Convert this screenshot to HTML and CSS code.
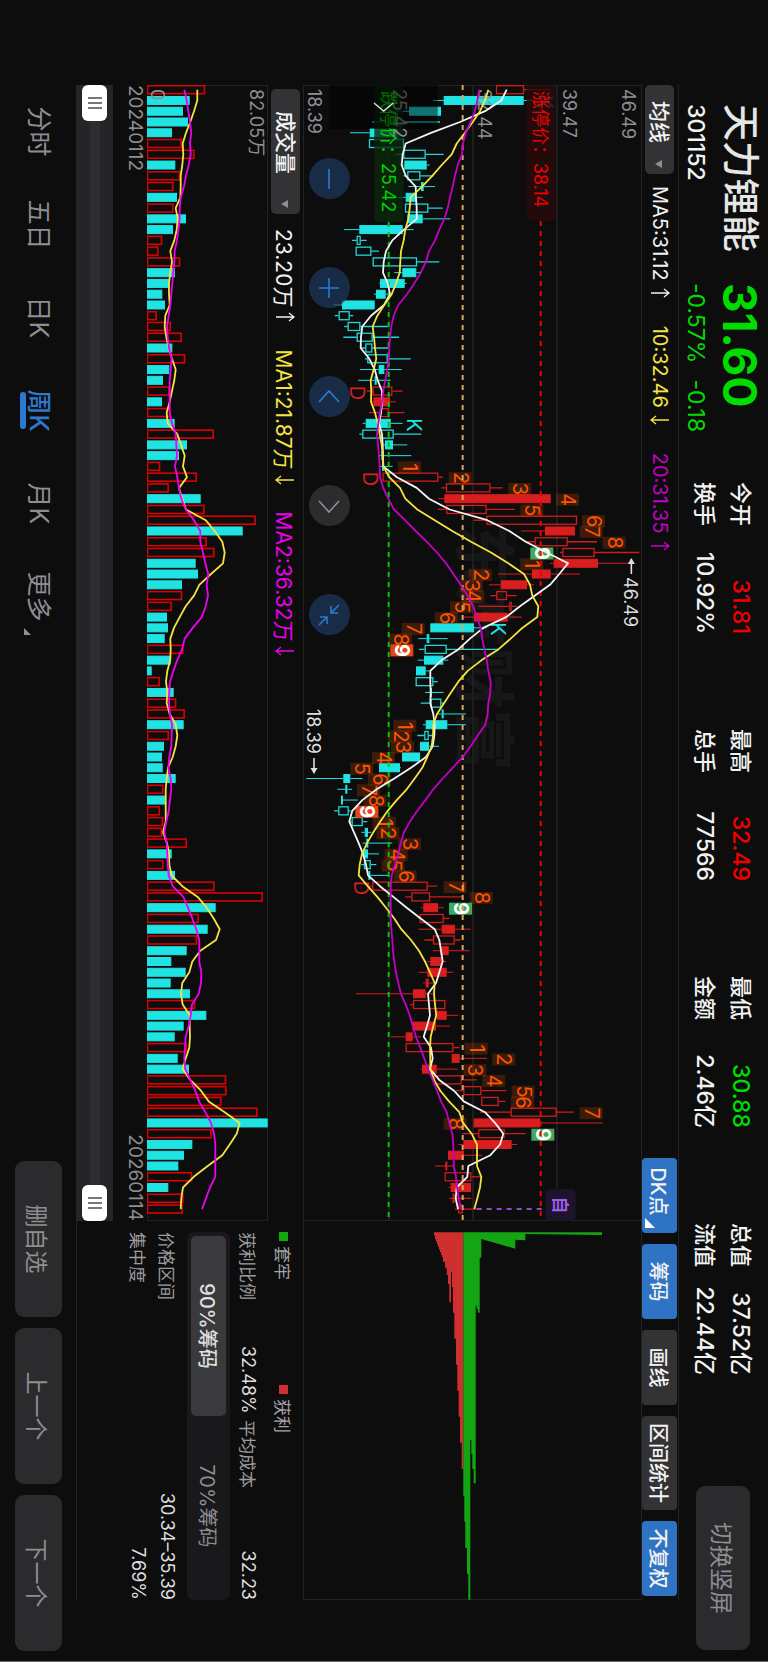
FILE: index.html
```html
<!DOCTYPE html>
<html lang="zh-CN">
<head>
<meta charset="utf-8">
<meta name="viewport" content="width=device-width, initial-scale=1">
<title>天力锂能 301152</title>
<link rel="stylesheet" href="styles.css">
</head>
<body>
<svg class="defs" aria-hidden="true">
  <symbol id="up" viewBox="0 0 10 20"><path d="M5 19V1M1 6l4-5 4 5"/></symbol>
  <symbol id="down" viewBox="0 0 10 20"><path d="M5 1v18M1 14l4 5 4-5"/></symbol>
</svg>
<div class="screen">
<main class="stage">
  <header class="header">
    <div class="quote">
      <h1 class="name">天力锂能</h1>
      <strong class="price">31.60</strong>
      <span class="code">301152</span>
      <span class="change"><span>-0.57%</span><span>-0.18</span></span>
    </div>
    <dl class="stats">
      <div><dt>今开</dt><dd class="rise">31.81</dd></div>
      <div><dt>最高</dt><dd class="rise">32.49</dd></div>
      <div><dt>最低</dt><dd class="fall">30.88</dd></div>
      <div><dt>总值</dt><dd>37.52亿</dd></div>
      <div><dt>换手</dt><dd>10.92%</dd></div>
      <div><dt>总手</dt><dd>77566</dd></div>
      <div><dt>金额</dt><dd>2.46亿</dd></div>
      <div><dt>流值</dt><dd>22.44亿</dd></div>
    </dl>
    <button class="plain rotate" type="button">切换竖屏</button>
  </header>

  <section class="toolbar">
    <div class="picker"><select aria-label="主图指标"><option>均线</option></select></div>
    <span class="ma white">MA5:31.12<svg class="arrow"><use href="#up"/></svg></span>
    <span class="ma yellow">10:32.46<svg class="arrow"><use href="#down"/></svg></span>
    <span class="ma purple">20:31.35<svg class="arrow"><use href="#up"/></svg></span>
    <div class="tools">
      <button class="tool on more" type="button">DK点</button>
      <button class="tool on" type="button">筹码</button>
      <button class="tool" type="button">画线</button>
      <button class="tool wide" type="button">区间统计</button>
      <button class="tool on" type="button">不复权</button>
    </div>
  </section>

  <div class="body">
    <section class="charts">
      <div class="kline">
        <svg id="kline" viewBox="0 0 1136 339" preserveAspectRatio="xMinYMin meet"></svg>
        <div class="pad">
          <button type="button" aria-label="缩小"><svg viewBox="0 0 24 24"><path d="M2 12h20"/></svg></button>
          <button type="button" aria-label="放大"><svg viewBox="0 0 24 24"><path d="M2 12h20M12 2v20"/></svg></button>
          <button type="button" aria-label="左移"><svg viewBox="0 0 24 24"><path d="M17 2L6 12l11 10"/></svg></button>
          <button type="button" aria-label="右移" disabled><svg viewBox="0 0 24 24"><path d="M7 2l11 10L7 22"/></svg></button>
          <button type="button" aria-label="收起"><svg viewBox="0 0 24 24"><path d="M2 2l8 8M10 3v7H3M22 22l-8-8M14 21v-7h7"/></svg></button>
        </div>
      </div>
      <div class="volhead">
        <div class="picker large"><select aria-label="副图指标"><option>成交量</option></select></div>
        <span class="ma white">23.20万<svg class="arrow"><use href="#up"/></svg></span>
        <span class="ma yellow">MA1:21.87万<svg class="arrow"><use href="#down"/></svg></span>
        <span class="ma magenta">MA2:36.32万<svg class="arrow"><use href="#down"/></svg></span>
      </div>
      <svg id="volume" class="volume" viewBox="0 0 1136 121" preserveAspectRatio="xMinYMin meet"></svg>
      <div class="dates"><time>20240112</time><time>20260114</time></div>
      <div class="range">
        <input type="range" min="0" max="100" value="0" aria-label="开始日期">
        <input type="range" min="0" max="100" value="100" aria-label="结束日期">
      </div>
    </section>

    <aside class="side">
      <svg id="chips" class="chips" viewBox="0 0 379 339" preserveAspectRatio="xMinYMin meet"></svg>
      <div class="info">
        <div class="legend"><span class="key green">套牢</span><span class="key red">获利</span></div>
        <div class="line four"><span>获利比例</span><b>32.48%</b><span>平均成本</span><b>32.23</b></div>
        <div class="segment">
          <button class="active" type="button">90%筹码</button>
          <button type="button">70%筹码</button>
        </div>
        <div class="line"><span>价格区间</span><b>30.34–35.39</b></div>
        <div class="line"><span>集中度</span><b>7.69%</b></div>
      </div>
    </aside>
  </div>

  <footer class="footer">
    <nav class="periods">
      <a href="#">分时</a>
      <a href="#">五日</a>
      <a href="#">日K</a>
      <a href="#" class="current">周K</a>
      <a href="#">月K</a>
      <a href="#" class="extra">更多</a>
    </nav>
    <div class="actions">
      <button class="plain" type="button">删自选</button>
      <button class="plain" type="button">上一个</button>
      <button class="plain" type="button">下一个</button>
    </div>
  </footer>
</main>
</div>
<script src="chart.js"></script>
</body>
</html>
```
FILE: styles.css
```css
* { box-sizing: border-box; }

html { background: #0d0d0d; }

body {
  margin: 0;
  background: #0d0d0d;
  color: #f2f2f2;
  font-family: Inter, "Noto Sans CJK SC", sans-serif;
}

button, select { font: inherit; color: inherit; border: 0; padding: 0; }

.defs { position: absolute; width: 0; height: 0; }

.screen { width: 100%; height: 100vh; overflow: hidden; }

/* landscape screen turned a quarter clockwise */
.stage {
  display: flex;
  flex-direction: column;
  width: 100vh;
  height: 100vw;
  padding-left: 85px;
  border-right: 1px solid #6a6a6c;
  transform-origin: 0 0;
  transform: rotate(90deg) translateY(-100%);
}

/* header */
.header {
  display: flex;
  height: 89px;
  padding: 0 11px 0 19px;
}

.quote {
  display: grid;
  grid-template-columns: 179px 199px;
  grid-template-rows: 46px 42px;
  padding-top: 5px;
  align-items: center;
}

.name { margin: 0; font-size: 37px; font-weight: 500; line-height: 46px; color: #e6e6e6; }
.price { font-size: 46px; font-weight: 700; line-height: 46px; color: #00dc00; }
.code { font-size: 23px; font-weight: 500; }
.change { display: flex; gap: 16px; font-size: 23px; color: #00dc00; }

.stats {
  display: grid;
  grid-template-columns: repeat(4, 152px);
  grid-auto-rows: 36px;
  column-gap: 95px;
  margin: 0;
  padding-top: 9px;
  line-height: 36px;
}

.stats div { display: flex; justify-content: space-between; white-space: nowrap; }
.stats dt { font-size: 22px; font-weight: 500; }
.stats dd { margin: 0; font-size: 23px; font-weight: 500; }
.stats .rise { color: #f00000; }
.stats .fall { color: #00dc00; }

.plain {
  height: 47px;
  width: 156px;
  border-radius: 9px;
  background: #2b2b2d;
  color: #8e8e93;
  font-size: 23px;
}

.rotate { width: 164px; height: 54px; margin: 18px 0 0 auto; }

/* indicator toolbar */
.toolbar {
  display: flex;
  align-items: center;
  height: 37px;
  margin-right: 61px;
  border-top: 1px solid #232323;
}

.picker { position: relative; margin-right: 12px; }

.picker select {
  display: block;
  width: 89px;
  height: 29px;
  padding-left: 16px;
  border-radius: 5px;
  background: #333335;
  font-size: 21px;
  line-height: 29px;
  font-weight: 500;
  appearance: none;
}

.picker.large { margin-left: 4px; margin-right: 15px; }
.picker.large select { width: 125px; padding-left: 22px; }

.picker::after {
  content: "";
  position: absolute;
  right: 6px;
  top: 12px;
  border: 4px solid transparent;
  border-top: 7px solid #8e8e93;
  border-bottom: 0;
}

.ma { display: flex; align-items: center; gap: 7px; margin-right: 28px; font-size: 20px; }
.volhead .ma { font-size: 21px; gap: 5px; margin-right: 27px; }
.arrow { width: 10px; height: 20px; fill: none; stroke: currentColor; stroke-width: 1.3; }
.white { color: #f2f2f2; }
.yellow { color: #f5e342; }
.purple { color: #c400c4; }
.magenta { color: #ee00ee; }

.tools { display: flex; gap: 11px; margin-left: auto; padding-right: 4px; }

.tool {
  position: relative;
  width: 75px;
  height: 35px;
  border-radius: 4px;
  background: #333335;
  font-size: 20px;
  font-weight: 500;
}

.tool.on { background: #2f74c4; }
.tool.wide { width: 94px; }
.tool.more { padding-right: 8px; }

.tool.more::after {
  content: "";
  position: absolute;
  right: 5px;
  bottom: 3px;
  border-left: 10px solid transparent;
  border-bottom: 10px solid #fff;
}

/* charts */
.body {
  display: grid;
  grid-template-columns: 1136fr 379fr;
  margin-right: 61px;
  border-bottom: 1px solid #232323;
}

.charts, .side { min-width: 0; }
.kline { position: relative; }
.kline svg, .volume, .chips { display: block; width: 100%; }

.pad { position: absolute; left: 73px; bottom: 6px; display: flex; gap: 68px; }

.pad button {
  display: grid;
  place-items: center;
  width: 41px;
  height: 41px;
  border-radius: 50%;
  background: rgba(30, 58, 98, .7);
  color: #2f78d0;
}

.pad button:disabled { background: #2c2c2e; color: #8e8e93; }
.kline .pad svg { width: 24px; height: 24px; fill: none; stroke: currentColor; stroke-width: 1.6; }

.volhead { display: flex; align-items: center; height: 35px; }

.dates {
  display: flex;
  justify-content: space-between;
  height: 34px;
  font-size: 19px;
  line-height: 24px;
  color: #8e8e93;
}

.range {
  position: relative;
  height: 36px;
  background: linear-gradient(#252527 13px, #2d2d2f 13px 23px, #252527 23px);
}

.range input {
  position: absolute;
  inset: 0;
  width: 100%;
  height: 100%;
  margin: 0;
  background: none;
  pointer-events: none;
  appearance: none;
}

.range input::-webkit-slider-thumb {
  width: 36px;
  height: 25px;
  border-radius: 6px;
  background:
    linear-gradient(90deg, #777 2px, transparent 2px 5px, #777 5px 7px, transparent 7px 10px, #777 10px) 50% 50% / 12px 14px no-repeat,
    #fff;
  pointer-events: auto;
  appearance: none;
}

/* chip distribution */
.info {
  display: grid;
  grid-template-rows: 38px 32px 48px 34px 24px;
  padding-left: 11px;
  font-size: 17px;
}

.legend { display: grid; grid-template-columns: 153px 1fr; align-items: center; }
.key { display: flex; align-items: center; gap: 5px; color: #a4a4a6; }
.key::before { content: ""; width: 9px; height: 9px; }
.key.green::before { background: #14a514; }
.key.red::before { background: #cf2f2f; }

.line { display: flex; align-items: center; justify-content: space-between; color: #9c9c9e; }
.line b { font-weight: 400; font-size: 18px; color: #dcdcdc; }
.four { display: grid; grid-template-columns: 114px 74px 1fr auto; }

.segment {
  display: grid;
  grid-template-columns: 1fr 1fr;
  align-self: center;
  height: 43px;
  padding: 4px;
  border-radius: 7px;
  background: #19191b;
  font-size: 20px;
}

.segment button { border-radius: 5px; background: none; color: #8e8e93; }
.segment .active { background: #3a3a3c; color: #dedede; font-weight: 500; }

/* footer */
.footer { display: flex; justify-content: space-between; padding: 14px 10px 0 0; }
.periods { display: grid; grid-auto-flow: column; grid-auto-columns: 93px; }

.periods a {
  position: relative;
  font-size: 25px;
  line-height: 46px;
  text-align: center;
  color: #8e8e93;
  text-decoration: none;
}

.periods .current { color: #2f78d0; font-weight: 500; }

.periods .current::after {
  content: "";
  position: absolute;
  left: 28px;
  bottom: 5px;
  width: 37px;
  height: 6px;
  border-radius: 3px;
  background: #2f78d0;
}

.periods .extra::after {
  content: "";
  position: absolute;
  right: 8px;
  bottom: 9px;
  border-left: 7px solid transparent;
  border-bottom: 7px solid #8e8e93;
}

.actions { display: flex; gap: 11px; }

/* svg parts */
.frame { fill: none; stroke: #232323; }
.grid { stroke: #232323; stroke-width: 1.5; }
.watermark { fill: #171717; font-size: 62px; font-weight: 700; }
.axis { fill: #8e8e93; font-size: 18px; }
.cyan { fill: #20e4e4; stroke: #20e4e4; }
.cyan-open { fill: none; stroke: #20d8d8; }
.red-fill { fill: #d81e1e; stroke: #d81e1e; }
.red-open { fill: none; stroke: #d01c1c; }
.cyan-open, .red-open { stroke-width: 1.3; }
.vol-open { fill: #0d0d0d; stroke: #dc0000; stroke-width: 1.6; }
.trend { fill: none; stroke-width: 1.8; stroke-linejoin: round; }
.dash { fill: none; stroke-width: 2; stroke-dasharray: 5 5; }
.count { fill: #ff5500; font-size: 20px; text-anchor: middle; }
.count-nine { fill: #fff; font-size: 20px; font-weight: 700; text-anchor: middle; }
.limit { font-size: 18px; }
.sign { font-size: 20px; text-anchor: middle; }
.peak { fill: #dcdcdc; font-size: 18px; }
```
FILE: chart.js
```js
const STEP = 10.763;
const FIRST = 4.7;
const px = i => FIRST + STEP * i;
const py = v => 342 - v / 3;      // price level to y
const vy = v => 121 - (v - 261) / 3; // volume level to y

// kind, body low, body high, low, high
const candles = `o588,672,588,749 c431,671,399,704 c327,423,270,424 h291,304,216,420 c209,293,150,293 h207,311,207,311 h310,377,286,431 c313,380,300,389 h322,361,310,400 c363,371,325,405
c317,349,290,369 h315,385,315,428 c322,368,322,451 c178,308,132,341 h170,182,156,200 h167,214,167,237 h218,351,218,418 c307,349,283,360 c240,314,238,320 c228,257,222,265
c126,224,101,224 h116,149,104,160 h143,181,133,265 h170,218,130,297 h196,217,180,265 h202,263,195,332 c236,253,180,305 c224,230,174,272 o218,277,200,308 r220,270,212,288
o240,266,207,314 c197,272,188,308 h187,281,178,364 c255,279,245,322 c247,250,240,334 c246,252,240,278 o248,415,248,429 o438,571,424,608 r433,752,415,752 o439,560,414,644
o559,831,521,831 r735,825,663,825 o704,803,675,891 o787,884,780,1018 r761,894,750,1000 r696,752,594,839 r602,681,567,702 o589,621,571,650 o628,635,536,651 r522,623,490,666
c391,522,391,560 c380,388,355,443 h374,440,357,595 c372,430,353,445 c348,377,348,388 h347,400,347,413 c392,396,375,431 h392,424,362,430 c425,431,410,498 c377,442,369,498
h373,386,352,400 c360,387,360,417 c306,360,306,360 c237,300,237,303 c130,151,19,187 c137,142,112,156 c126,129,124,174 h115,146,102,152 h155,188,150,202 c194,204,184,213
c201,205,188,277 c190,204,184,237 h192,212,184,229 c207,211,203,264 o217,383,210,412 o334,390,316,490 r370,414,364,431 o359,431,355,449 r425,465,355,512 o399,464,373,482
r421,446,399,509 r391,425,382,438 r382,440,356,459 r377,386,369,401 r339,377,167,399 o339,436,330,436 r411,440,404,475 r337,408,337,450 r317,338,273,363 o317,460,317,478
r455,479,455,561 r366,410,362,473 o402,485,402,530 o490,544,468,619 o544,596,544,616 o632,770,540,822 r521,720,521,909 o535,614,487,677 r490,635,475,651 r444,492,444,547
r438,442,405,460 o434,514,434,545 r452,513,446,513 o458,464,448,513 o475,488,465,530`.split(/\s+/).map(s => [s[0], ...s.slice(1).split(',').map(Number)]);

const ma5 = [620,604,555,480,393,317,308,305,317,347,348,350,350,312,277,258,251,249,263,270,252,213,187,183,182,208,224,233,246,247,243,237,246,248,249,250,291,350,387,449,562,628,677,740,804,778,750,705,660,618,550,510,475,425,391,391,392,391,400,404,403,398,378,333,283,230,187,157,148,162,176,189,198,204,240,280,320,362,404,418,423,428,418,408,384,387,390,381,371,393,398,390,418,462,491,555,585,610,600,571,505,502,470,467,474];
const ma10 = [565,555,540,518,495,470,455,425,397,366,332,329,325,316,311,303,301,299,288,275,253,232,218,222,225,229,221,212,214,213,225,233,239,245,248,250,268,300,316,352,404,457,513,573,625,672,690,697,715,712,667,632,595,545,503,475,453,432,411,400,399,395,382,367,344,320,290,263,241,220,201,186,179,176,203,232,258,283,304,333,357,375,390,404,402,405,409,400,392,390,391,391,402,421,447,478,489,515,531,531,531,544,540,532,523];
const ma20 = [538,532,524,512,497,489,486,473,465,458,450,443,433,418,405,387,378,362,343,321,295,281,274,270,268,266,262,256,250,246,240,235,231,234,237,239,240,250,265,282,315,347,380,411,438,460,482,503,520,530,542,547,553,560,565,572,571,565,563,556,533,512,488,458,428,400,376,352,330,312,302,295,285,275,272,272,272,272,274,277,279,283,288,295,303,317,329,338,348,361,373,384,398,411,423,440,448,457,460,461,461,468,471,476,483];

const volumes = 'o435 c389 c369 c384 c336 o365 o403 c346 o360 o340 c351 o340 c378 c339 o306 o295 o360 c345 c327 c307 c315 o290 o332 o365 c337 o375 c328 c309 o328 c306 o330 c344 o461 c381 c357 o300 o410 o326 c422 o433 o587 c548 o440 o463 c407 c414 c366 o366 o335 c321 c324 c314 o370 c332 c275 o299 c341 o348 o374 c371 o326 c312 c306 c308 c347 o310 c316 o299 o309 o306 o380 c335 o310 c345 o463 o608 c467 o416 c443 o411 c380 c334 c377 c332 c390 o405 c439 c371 c344 o380 c353 c387 o498 o499 o484 o592 c623 o454 c397 c372 c355 o396 c325 o370 o368'.split(' ');
const vma1 = [412,412,402,391,378,368,370,367,362,362,361,347,353,350,343,331,336,331,327,327,329,316,314,319,326,336,347,343,336,329,320,323,352,363,374,369,381,357,367,378,437,464,487,494,489,453,418,402,377,359,342,331,332,331,322,318,322,320,329,347,352,347,338,324,320,317,317,317,317,309,321,327,328,335,367,413,440,461,479,468,421,397,388,367,363,368,389,389,390,388,377,368,391,423,446,494,539,530,509,487,443,401,369,364,362];
const vma2 = [373,380,385,390,394,390,392,386,378,372,362,359,359,355,351,344,343,340,337,334,331,326,321,323,327,335,332,329,329,329,329,336,347,349,351,345,352,357,364,377,402,421,421,429,436,445,440,444,437,425,398,374,366,352,340,330,328,327,330,336,335,334,328,325,332,334,330,326,319,313,320,322,323,326,338,370,384,397,409,418,418,418,424,423,416,396,392,386,377,375,373,376,391,406,417,436,453,462,466,466,466,466,450,438,426];

// candle index, level, digit; g and r mark a completed nine
const counts = [[35,330,1],[36,482,2],[37,661,3],[38,804,4],[39,697,5],[40,882,6],[41,875,7],[42,944,8],[43,727,'g'],[44,697,1],[45,542,2],[46,515,3],[47,520,4],[48,486,5],[49,440,6],[50,341,7],[51,303,8],[52,307,'r'],
[59,316,1],[60,302,2],[61,309,3],[62,252,4],[63,187,5],[64,240,6],[65,207,7],[66,227,8],[67,202,'r'],[68,254,1],[69,265,2],[70,330,3],[71,290,4],[72,281,5],[73,317,6],[74,467,7],[75,545,8],[76,483,'g'],
[89,530,1],[90,613,2],[91,526,3],[92,583,4],[93,671,5],[94,669,6],[95,875,7],[96,467,8],[97,730,'g']];

const rect = (x, y, w, h, cls, extra = '') => `<rect x="${x}" y="${y}" width="${w}" height="${h}" class="${cls}" ${extra}/>`;
const text = (x, y, s, cls, extra = '') => `<text x="${x}" y="${y}" class="${cls}" ${extra}>${s}</text>`;
const trend = (list, fy, color) => `<polyline class="trend" stroke="${color}" points="${list.map((v, i) => px(i).toFixed(1) + ',' + fy(v).toFixed(1)).join(' ')}"/>`;

function drawKline() {
  let s = text(438, 181, '东方财富', 'watermark');
  s += rect(.5, .5, 1135, 338, 'frame');
  [85, 169, 253].forEach(y => { s += `<path class="grid" d="M0 ${y}H1136"/>`; });
  const cls = { c: 'cyan', h: 'cyan-open', r: 'red-fill', o: 'red-open' };
  candles.forEach(([k, b1, b2, lo, hi], i) => {
    const x = px(i);
    s += `<path class="${cls[k]}" d="M${x} ${py(lo)}V${py(b1)}M${x} ${py(b2)}V${py(hi)}"/>`;
    s += rect(x - 4, py(b2) + .5, 8, Math.max(1, (b2 - b1) / 3 - 1), cls[k]);
  });
  counts.forEach(([i, v, d]) => {
    const x = px(i) + 1;
    const nine = d === 'g' || d === 'r';
    s += rect(x - 6, py(v) - 11, 12, 23, '', `fill="${d === 'g' ? '#3daa5c' : d === 'r' ? '#e2451a' : '#ff5500'}" fill-opacity="${nine ? 1 : .2}"`);
    s += text(x, py(v) + 7, nine ? 9 : d, nine ? 'count-nine' : 'count');
  });
  [[393, 172, 'D'], [479, 211, 'D'], [888, 184, 'D'], [425, 343, 'K'], [629, 595, 'K'], [102, 735, 'K']].forEach(([x, v, c]) => {
    s += text(x - 85, py(v) + 7, c, 'sign', `fill="${c === 'D' ? '#d81e1e' : '#20e4e4'}"`);
  });
  s += `<path class="dash" stroke="#d9a566" d="M0 ${py(488)}H1136"/>`;
  s += rect(0, py(767), 136, 29, '', 'rx="3" fill="#280c0c" fill-opacity=".85"');
  s += rect(0, py(310), 137, 29, '', 'rx="3" fill="#0a280c" fill-opacity=".8"');
  s += `<path class="dash" stroke="#f00000" d="M136 ${py(722)}H1133"/>`;
  s += `<path class="dash" stroke="#00c800" d="M137 ${py(266)}H1134"/>`;
  [[139, '46.49'], [198, '39.47'], [283, '32.44'], [368, '25.42'], [453, '18.39']].forEach(([y, t]) => {
    s += text(4, y - 126 + 7, t, 'axis');
  });
  s += text(6, py(722) + 7, '涨停价：38.14', 'limit', 'fill="#f00000"');
  s += text(6, py(266) + 7, '跌停价：25.42', 'limit', 'fill="#00d400"');
  s += trend(ma5, py, '#f5f5f5') + trend(ma10, py, '#f5e342') + trend(ma20, py, '#c400c4');
  s += rect(0, py(413), 44, 108, '', 'fill="#000" fill-opacity=".5"');
  s += `<path d="M18 ${py(280)}L26 ${py(251)}L18 ${py(222)}" fill="none" stroke="#e0e0e0" stroke-width="1.4"/>`;
  s += text(492, py(994) + 7, '46.49', 'peak');
  s += `<path d="M474 ${py(994)}h15" stroke="#dcdcdc" stroke-width="1.6"/><path d="M473 ${py(994)}l6-3.500v7z" fill="#dcdcdc"/>`;
  s += text(624, py(42) + 7, '18.39', 'peak');
  s += `<path d="M673 ${py(42)}h15" stroke="#dcdcdc" stroke-width="1.6"/><path d="M689 ${py(42)}l-6-3.500v7z" fill="#dcdcdc"/>`;
  s += `<path class="dash" stroke="#8a4fd0" d="M1124 ${py(530)}V${py(738)}"/>`;
  s += rect(1104, py(827), 32, 30, '', 'rx="5" fill="#1d142b"');
  s += text(1120, py(780) + 6, '自', '', 'fill="#a25cf0" font-size="17" font-weight="700" text-anchor="middle"');
  document.getElementById('kline').innerHTML = s;
}

function drawVolume() {
  let s = rect(.5, .5, 1135, 120, 'frame');
  volumes.forEach((t, i) => {
    const y = vy(+t.slice(1));
    const cyan = t[0] === 'c';
    s += rect(px(i) - 4, y + .5, 8, 120 - y, cyan ? 'cyan' : 'vol-open');
  });
  s += text(4, 18, '82.05万', 'axis') + text(4, 117, '0', 'axis');
  s += trend(vma1, vy, '#f5e342') + trend(vma2, vy, '#f000f0');
  document.getElementById('volume').innerHTML = s;
}

function drawChips() {
  const pts = list => list.map(([v, t]) => `${(t / 3 - 6).toFixed(1)},${py(v + 360).toFixed(1)}`).join(' ');
  const steps = list => list.flatMap(([a, b, t]) => [[a, t], [b, t]]);
  const red = [[42, 52], ...steps([[42,45,62],[45,48,72],[48,51,80],[51,54,88],[54,57,96],[57,60,104],[60,63,111],[63,66,119],[66,69,127],[69,75,140],[75,80,158],[80,84,180],[84,88,207],[88,93,262],[93,96,172],[96,99,216],[99,103,293],[103,108,371],[108,112,449],[112,116,527],[116,120,605],[120,125,683],[125,130,762]]), [130, 52]];
  const green = [[130, 52], ...steps([[130,133,842],[133,136,920],[136,141,999],[141,145,1077],[145,151,1154],[151,154,674],[154,157,717],[157,161,762],[161,167,805],[167,170,272],[170,174,282],[174,179,293],[179,184,128]]), [184, 72], [286, 101], [286, 74], [316, 76], [316, 57], [546, 60], [546, 52]];
  document.getElementById('chips').innerHTML = rect(-.5, .5, 379, 338, 'frame')
    + `<polygon points="${pts(red)}" fill="#cf2f2f"/><polygon points="${pts(green)}" fill="#14a514"/>`;
}

drawKline();
drawVolume();
drawChips();
```
